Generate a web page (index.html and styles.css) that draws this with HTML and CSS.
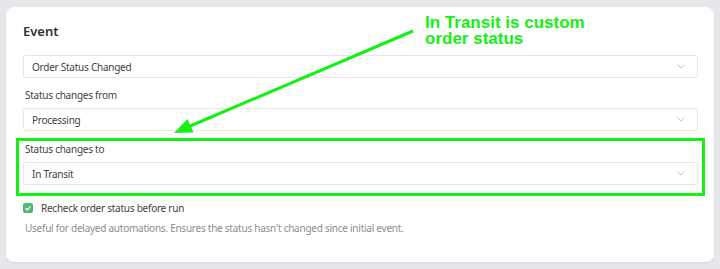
FILE: index.html
```html
<!DOCTYPE html>
<html>
<head>
<meta charset="utf-8">
<link rel="stylesheet" href="styles.css">
</head>
<body>
<div class="card">
  <h2 class="title">Event</h2>
  <div class="select first"><span>Order Status Changed</span><svg class="chev" viewBox="0 0 8 5" width="8" height="5"><path d="M0.5 0.5 L4 4 L7.5 0.5" fill="none" stroke="#bbb" stroke-width="0.9"/></svg></div>
  <div class="label">Status changes from</div>
  <div class="select"><span>Processing</span><svg class="chev" viewBox="0 0 8 5" width="8" height="5"><path d="M0.5 0.5 L4 4 L7.5 0.5" fill="none" stroke="#bbb" stroke-width="0.9"/></svg></div>
  <div class="highlight">
    <div class="label flush">Status changes to</div>
    <div class="select"><span>In Transit</span><svg class="chev" viewBox="0 0 8 5" width="8" height="5"><path d="M0.5 0.5 L4 4 L7.5 0.5" fill="none" stroke="#bbb" stroke-width="0.9"/></svg></div>
  </div>
  <label class="check-row">
    <span class="checkbox"><svg viewBox="0 0 10 10" width="10" height="10"><path d="M2.6 5.2 L4.3 6.8 L7.4 3.6" fill="none" stroke="#fff" stroke-width="1.2"/></svg></span>
    <span>Recheck order status before run</span>
  </label>
  <div class="help">Useful for delayed automations. Ensures the status hasn't changed since initial event.</div>
</div>
<div class="annotation">
  <div class="ann-line">In Transit is custom</div>
  <div class="ann-line">order status</div>
</div>
<svg class="arrow" width="720" height="269" viewBox="0 0 720 269">
  <line x1="413" y1="31" x2="189" y2="126.5" stroke="#14f014" stroke-width="3"/>
  <polygon points="174,133 193.5,132.5 187.5,119" fill="#14f014"/>
</svg>
</body>
</html>
```
FILE: styles.css
```css
html, body {
  margin: 0;
  padding: 0;
}
body {
  background: #e6e7eb;
  font-family: "Noto Sans", "DejaVu Sans", sans-serif;
  width: 720px;
  height: 269px;
  position: relative;
  overflow: hidden;
  padding-top: 7px;
  box-sizing: border-box;
}
.card {
  margin: 0 6px;
  height: 255px;
  box-sizing: border-box;
  background: #fff;
  border-radius: 8px;
  box-shadow: 0 1px 2px rgba(0,0,0,0.08);
  padding: 15px 16px 0 17px;
  letter-spacing: -0.25px;
}
.title {
  margin: 0;
  font-size: 13px;
  line-height: 18px;
  font-weight: 600;
  color: #2f3035;
  letter-spacing: 0;
}
.select {
  display: flex;
  align-items: center;
  justify-content: space-between;
  height: 23px;
  box-sizing: border-box;
  border: 1px solid #e6e7eb;
  border-radius: 3px;
  background: #fff;
  padding: 0 12px 0 8px;
  margin-top: 5px;
  font-size: 10px;
  color: #3d3f44;
}
.select.first {
  margin-top: 15px;
}
.chev {
  display: block;
}
.label {
  margin-top: 9px;
  font-size: 10px;
  line-height: 16px;
  color: #3d3f44;
  padding-left: 2px;
}
.label.flush {
  margin-top: 0;
}
.highlight {
  margin: 7px -7px 0 -7px;
  border: 3px solid #14f014;
  padding: 0 4px 8px 4px;
}
.check-row {
  display: flex;
  align-items: center;
  gap: 8px;
  margin-top: 4px;
  height: 16px;
  font-size: 10px;
  color: #3d3f44;
}
.checkbox {
  width: 10px;
  height: 10px;
  border-radius: 2px;
  background: #4fba78;
  display: flex;
}
.help {
  margin-top: 4px;
  font-size: 10px;
  line-height: 16px;
  color: #8a8c91;
  padding-left: 2px;
}
.annotation {
  position: absolute;
  left: 425px;
  top: 15px;
  font-family: "Liberation Sans", Arial, sans-serif;
  font-weight: bold;
  font-size: 17px;
  color: #14f014;
}
.ann-line {
  height: 16px;
  line-height: 16px;
  white-space: nowrap;
}
.arrow {
  position: absolute;
  left: 0;
  top: 0;
  pointer-events: none;
}
```
